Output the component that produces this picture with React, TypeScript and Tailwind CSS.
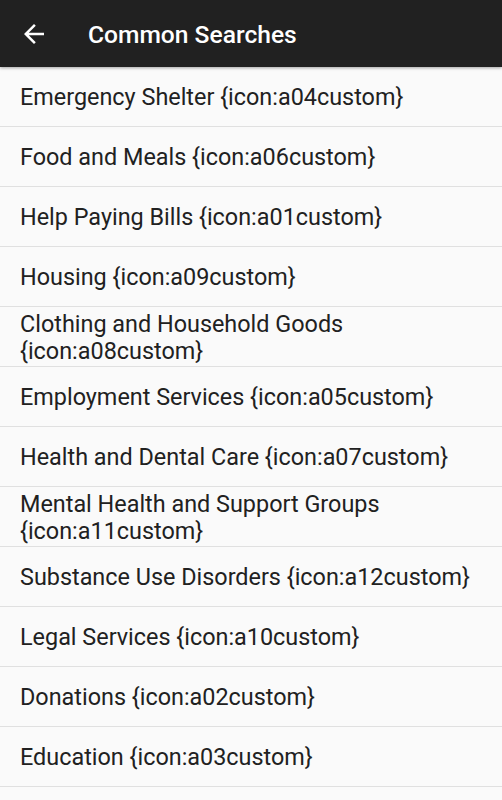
import React from "react";

const items = [
  "Emergency Shelter {icon:a04custom}",
  "Food and Meals {icon:a06custom}",
  "Help Paying Bills {icon:a01custom}",
  "Housing {icon:a09custom}",
  "Clothing and Household Goods {icon:a08custom}",
  "Employment Services {icon:a05custom}",
  "Health and Dental Care {icon:a07custom}",
  "Mental Health and Support Groups {icon:a11custom}",
  "Substance Use Disorders {icon:a12custom}",
  "Legal Services {icon:a10custom}",
  "Donations {icon:a02custom}",
  "Education {icon:a03custom}",
];

export default function App() {
  return (
    <div className="w-[502px] h-[800px] overflow-hidden bg-[#fafafa]" style={{ fontFamily: "Roboto, 'Noto Sans', sans-serif" }}>
      <div className="h-[67px] bg-[#212121] flex items-center shadow-[0_1px_3px_rgba(0,0,0,0.35)] relative z-10">
        <div className="w-[88px] flex items-center pl-[19px] pt-[1px]">
          <svg width="30" height="30" viewBox="0 0 24 24" fill="#ffffff">
            <path d="M20 11H7.83l5.59-5.59L12 4l-8 8 8 8 1.41-1.41L7.83 13H20v-2z" />
          </svg>
        </div>
        <div className="text-white text-[24.6px] font-medium leading-none pt-[3px]">Common Searches</div>
      </div>
      <div>
        {items.map((t) => (
          <div key={t} className="h-[60px] border-b border-[#e0e0e0] flex items-center px-5">
            <div className="text-[23.4px] leading-[27px] text-[#212121] pt-[2px]">{t}</div>
          </div>
        ))}
      </div>
    </div>
  );
}
